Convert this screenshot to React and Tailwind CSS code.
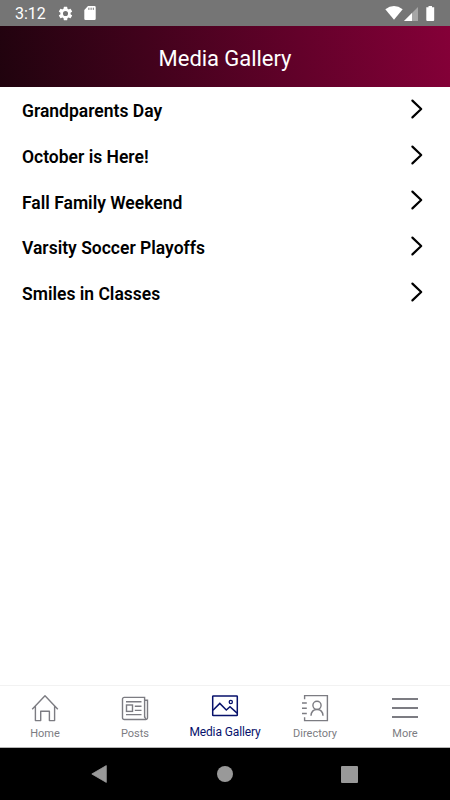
import { useState } from "react";

const albums = [
  "Grandparents Day",
  "October is Here!",
  "Fall Family Weekend",
  "Varsity Soccer Playoffs",
  "Smiles in Classes",
];

const HomeIcon = () => (
  <svg width="28" height="28" viewBox="0 0 28 28" fill="none" stroke="currentColor" strokeWidth="1.4">
    <path d="M1.2 15.3 14 1.8l12.8 13.5M4.4 12.2v14.4h5.3v-9.3h8.7v9.3h5.2V12.2" strokeLinejoin="round" />
  </svg>
);

const PostsIcon = () => (
  <svg width="28" height="28" viewBox="0 0 28 28" fill="none" stroke="currentColor" strokeWidth="1.4">
    <path d="M23.6 23.4V3.4H3.2a1.7 1.7 0 0 0-1.7 1.7v18.6a1.8 1.8 0 0 0 1.8 1.8h21.4a1.8 1.8 0 0 0 1.8-1.8V6.3h-2.9" />
    <path d="M23.6 22.5q.2 1.3 1.4 2.6M5 7.7h15.5M13.8 12.3h6.7M13.8 16.4h6.7M5 20.6h15.5" />
    <rect x="5.5" y="11" width="6" height="6.4" />
  </svg>
);

const GalleryIcon = () => (
  <svg width="28" height="28" viewBox="0 0 28 28" fill="none" stroke="currentColor" strokeWidth="1.5">
    <rect x="1.7" y="2" width="24.6" height="19.6" rx="0.6" />
    <path d="m2 16.3 6.8-6.9 6.5 6.6 3.7-3.3 7.1 6.4" />
    <circle cx="19.8" cy="8" r="1.6" strokeWidth="1.3" />
  </svg>
);

const DirectoryIcon = () => (
  <svg width="28" height="28" viewBox="0 0 28 28" fill="none" stroke="currentColor" strokeWidth="1.4">
    <path d="M3.6 5.2V1.6h22.8v25H3.6v-3.4M1 9h4.8M1 14.3h4.8M1 19.5h4.8" />
    <circle cx="16" cy="11.3" r="4.1" />
    <path d="M10 21.8c.2-3.8 2.3-6.3 6-6.3s5.8 2.5 6 6.3" />
  </svg>
);

const MoreIcon = () => (
  <svg width="28" height="28" viewBox="0 0 28 28" fill="none" stroke="currentColor" strokeWidth="1.8">
    <path d="M1 5h26M1 14h26M1 23h26" />
  </svg>
);

const tabs = [
  { name: "Home", Icon: HomeIcon },
  { name: "Posts", Icon: PostsIcon },
  { name: "Media Gallery", Icon: GalleryIcon },
  { name: "Directory", Icon: DirectoryIcon },
  { name: "More", Icon: MoreIcon },
];

function StatusBar() {
  return (
    <div className="flex h-[26px] shrink-0 items-center bg-[#757575] pl-[15px] pr-[15px] text-white">
      <span className="w-[42px] pt-[2px] text-[16px] leading-none">3:12</span>
      <svg className="mt-px" width="17" height="17" viewBox="0 0 24 24" fill="currentColor">
        <path d="M19.14 12.94c.04-.3.06-.61.06-.94s-.02-.64-.07-.94l2.03-1.58a.49.49 0 0 0 .12-.61l-1.92-3.32a.49.49 0 0 0-.59-.22l-2.39.96a7 7 0 0 0-1.62-.94l-.36-2.54a.48.48 0 0 0-.48-.41h-3.84a.48.48 0 0 0-.47.41l-.36 2.54a7.4 7.4 0 0 0-1.62.94l-2.39-.96a.48.48 0 0 0-.59.22L2.74 8.87a.47.47 0 0 0 .12.61l2.03 1.58a6 6 0 0 0-.09.94c0 .31.02.64.07.94l-2.03 1.58a.49.49 0 0 0-.12.61l1.92 3.32c.12.22.37.29.59.22l2.39-.96c.5.38 1.03.7 1.62.94l.36 2.54c.05.24.24.41.48.41h3.84c.24 0 .44-.17.47-.41l.36-2.54a7 7 0 0 0 1.62-.94l2.39.96c.22.08.47 0 .59-.22l1.92-3.32a.47.47 0 0 0-.12-.61zM12 15.6a3.6 3.6 0 1 1 0-7.2 3.6 3.6 0 0 1 0 7.2" />
      </svg>
      <svg className="ml-[10px]" width="12" height="14" viewBox="0 0 12 14">
        <path d="M4 0h6.5A1.2 1.2 0 0 1 11.7 1.2v11.6a1.2 1.2 0 0 1-1.2 1.2h-9A1.2 1.2 0 0 1 .3 12.8V4z" fill="#fff" />
        <path d="M4.9 1.7v2.2M7.1 1.7v2.2M9.3 1.7v2.2" stroke="#757575" strokeWidth="1" />
      </svg>
      <svg className="ml-auto" width="18" height="14" viewBox="0 0 18 14">
        <path d="M.3 3.2Q9-3 17.7 3.2L9 13.8z" fill="#fff" />
      </svg>
      <svg className="ml-[1px] mt-px" width="15" height="14" viewBox="0 0 15 14">
        <path d="M0 14 14 0v14z" fill="#a6a6a6" />
        <path d="M0 14 8 6v8z" fill="#fff" />
      </svg>
      <svg className="ml-[7px] mt-px" width="9" height="15" viewBox="0 0 9 15">
        <path d="M2.5 0h3.5v1.3h2.2V14a1 1 0 0 1-1 1H1.3a1 1 0 0 1-1-1V1.3h2.2z" fill="#fff" />
      </svg>
    </div>
  );
}

export default function App() {
  const [active, setActive] = useState("Media Gallery");

  return (
    <div className="flex h-[800px] w-[450px] flex-col overflow-hidden bg-white font-['Roboto',sans-serif]">
      <StatusBar />

      <header className="flex h-[61px] shrink-0 items-center justify-center bg-[linear-gradient(80deg,#20030e_0%,#850038_100%)] pt-[4px]">
        <h1 className="text-[22px] leading-none tracking-[-0.05px] text-white">Media Gallery</h1>
      </header>

      <main className="flex-1 pt-px">
        {albums.map((title) => (
          <button
            key={title}
            className="flex h-[45.6px] w-full items-center justify-between pl-[22px] pr-[26px] text-left text-black"
          >
            <span className="pt-[2.6px] text-[17.5px] leading-none font-semibold">{title}</span>
            <svg
              className="-mt-[3px]"
              width="14"
              height="20"
              viewBox="0 0 14 20"
              fill="none"
              stroke="currentColor"
              strokeWidth="2.2"
              strokeLinecap="round"
              strokeLinejoin="round"
            >
              <path d="m2.4 1.6 8.8 8.4-8.800 8.400" />
            </svg>
          </button>
        ))}
      </main>

      <nav className="grid h-[63px] shrink-0 grid-cols-5 border-t border-t-[#f2f2f2] border-b border-b-[#b5b5b5]">
        {tabs.map(({ name, Icon }) => (
          <button
            key={name}
            onClick={() => setActive(name)}
            className={
              active === name
                ? "flex flex-col items-center pt-[8px] text-[#07116b]"
                : "flex flex-col items-center pt-[8px] text-[#7c7c82]"
            }
          >
            <Icon />
            <span
              className={
                active === name
                  ? "mt-[4px] text-[12px] leading-[12px] tracking-[-0.12px] whitespace-nowrap"
                  : "mt-[6px] text-[11px] leading-[12px] whitespace-nowrap"
              }
            >
              {name}
            </span>
          </button>
        ))}
      </nav>

      <div className="flex h-[52px] shrink-0 items-center bg-black pl-[91px] text-[#999999]">
        <svg width="16" height="18" viewBox="0 0 16 18" fill="currentColor">
          <path d="M15.3.6v16.8L.8 9z" stroke="currentColor" strokeWidth="0.8" strokeLinejoin="round" />
        </svg>
        <span className="ml-[110px] size-4 rounded-full bg-current" />
        <span className="ml-[108px] size-[17px] rounded-[1px] bg-current" />
      </div>
    </div>
  );
}
